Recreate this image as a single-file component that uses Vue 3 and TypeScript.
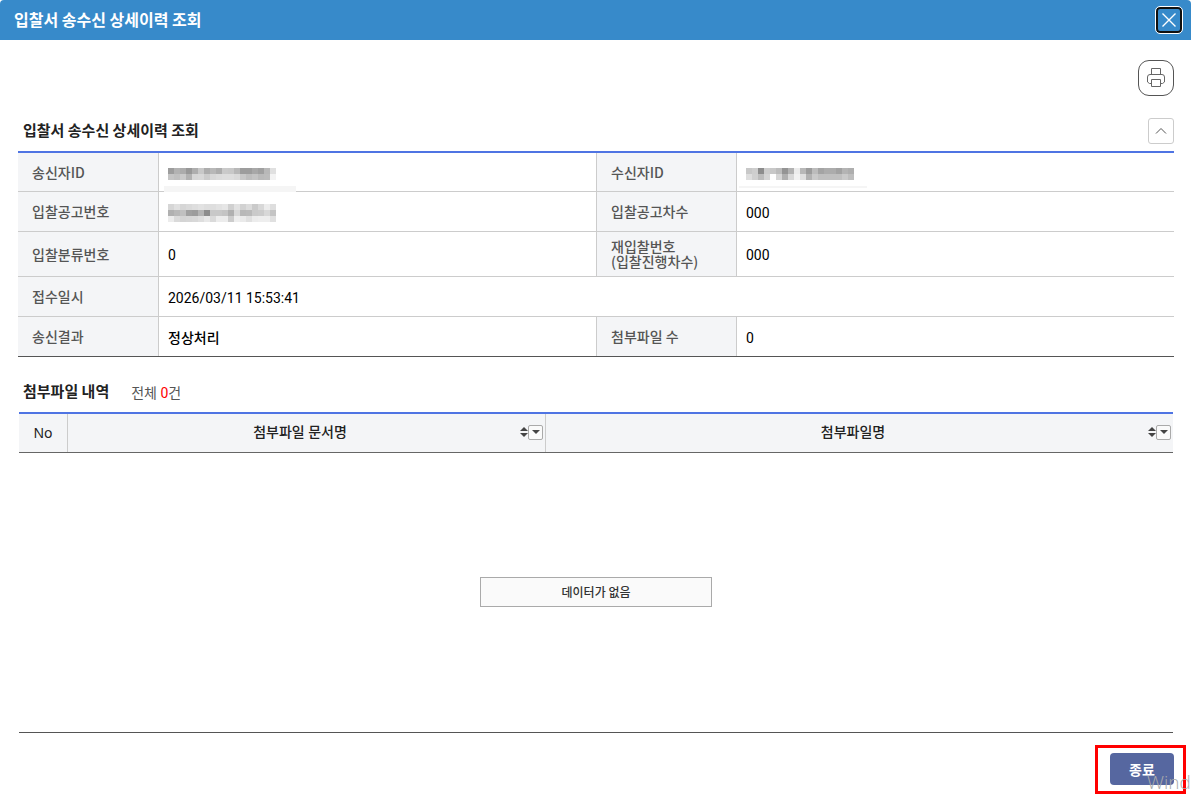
<script setup lang="ts">
interface Mosaic {
  label: string
  rows: number[][]
}

const CELL = 6

const sender: Mosaic = {
  label: '송신자ID 가림 처리',
  rows: [
    [157, 178, 172, 152, 174, 200, 173, 184, 173, 202, 200, 184, 157, 157, 168, 160, 184, 224],
    [197, 192, 202, 178, 214, 216, 204, 216, 220, 222, 222, 218, 200, 190, 196, 186, 188, 243],
  ],
}
const notice: Mosaic = {
  label: '입찰공고번호 가림 처리',
  rows: [
    [214, 224, 214, 218, 222, 226, 222, 222, 226, 230, 208, 226, 210, 220, 202, 216, 236, 222],
    [176, 184, 192, 160, 156, 180, 140, 200, 200, 196, 176, 216, 184, 186, 202, 204, 216, 196],
    [236, 218, 212, 214, 216, 222, 232, 218, 236, 236, 204, 238, 234, 224, 236, 238, 238, 224],
  ],
}
const receiver: Mosaic = {
  label: '수신자ID 가림 처리',
  rows: [
    [200, 206, 140, 204, 200, 188, 148, 178, 236, 184, 156, 188, 164, 172, 172, 162, 180, 174],
    [222, 208, 188, 212, 255, 214, 176, 216, 242, 224, 178, 202, 192, 192, 192, 192, 202, 190],
  ],
}

const gray = (v: number): string => `rgb(${v}, ${v}, ${v})`
const columns: string[] = ['첨부파일 문서명', '첨부파일명']
const total = 0
</script>

<template>
  <main class="dialog">
    <header class="bar">
      <h1>입찰서 송수신 상세이력 조회</h1>
      <button class="close" type="button" aria-label="닫기">
        <svg width="16" height="16" viewBox="0 0 16 16" aria-hidden="true">
          <path d="M1.500 1.500 14.500 14.500M14.500 1.500 1.500 14.500" fill="none" stroke="#fff" stroke-width="1.400" />
        </svg>
      </button>
    </header>

    <div class="body">
      <div class="tools">
        <button class="print" type="button" aria-label="인쇄">
          <svg width="20" height="20" viewBox="0 0 20 20" fill="none" stroke="#666" aria-hidden="true">
            <path d="M5.500 6.500V0.500h9v6M5.500 15.500H3.500L1.500 14V9a2.500 2.500 0 0 1 2.500-2.500h12a2.500 2.500 0 0 1 2.500 2.500v5l-2 1.500h-2M5.500 11.500h9v7h-9z" />
          </svg>
        </button>
      </div>

      <div class="heading">
        <h2>입찰서 송수신 상세이력 조회</h2>
        <button class="fold" type="button" aria-label="접기">
          <svg width="12" height="8" viewBox="0 0 12 8" aria-hidden="true">
            <path d="M1 6.500 6 1.500 11 6.500" fill="none" stroke="#555" />
          </svg>
        </button>
      </div>

      <table class="info">
        <colgroup>
          <col class="c-label" /><col /><col class="c-label" /><col />
        </colgroup>
        <tbody>
          <tr>
            <th scope="row">송신자ID</th>
            <td>
              <svg class="mosaic" width="108" height="12" role="img" :aria-label="sender.label" shape-rendering="crispEdges">
                <template v-for="(row, y) in sender.rows" :key="y">
                  <rect v-for="(v, x) in row" :key="x" :x="x * CELL" :y="y * CELL" :width="CELL" :height="CELL" :fill="gray(v)" />
                </template>
              </svg>
              <span class="smudge"></span>
            </td>
            <th scope="row">수신자ID</th>
            <td>
              <svg class="mosaic" width="108" height="12" role="img" :aria-label="receiver.label" shape-rendering="crispEdges">
                <template v-for="(row, y) in receiver.rows" :key="y">
                  <rect v-for="(v, x) in row" :key="x" :x="x * CELL" :y="y * CELL" :width="CELL" :height="CELL" :fill="gray(v)" />
                </template>
              </svg>
              <span class="smudge thin"></span>
            </td>
          </tr>
          <tr>
            <th scope="row">입찰공고번호</th>
            <td>
              <svg class="mosaic" width="108" height="18" role="img" :aria-label="notice.label" shape-rendering="crispEdges">
                <template v-for="(row, y) in notice.rows" :key="y">
                  <rect v-for="(v, x) in row" :key="x" :x="x * CELL" :y="y * CELL" :width="CELL" :height="CELL" :fill="gray(v)" />
                </template>
              </svg>
            </td>
            <th scope="row">입찰공고차수</th>
            <td>000</td>
          </tr>
          <tr class="tall">
            <th scope="row">입찰분류번호</th>
            <td>0</td>
            <th scope="row">재입찰번호<br />(입찰진행차수)</th>
            <td>000</td>
          </tr>
          <tr>
            <th scope="row">접수일시</th>
            <td colspan="3">2026/03/11 15:53:41</td>
          </tr>
          <tr>
            <th scope="row">송신결과</th>
            <td class="strong">정상처리</td>
            <th scope="row">첨부파일 수</th>
            <td>0</td>
          </tr>
        </tbody>
      </table>

      <div class="heading files">
        <h2>첨부파일 내역</h2>
        <p>전체 <em>{{ total }}</em>건</p>
      </div>

      <div class="grid">
        <table class="list">
          <colgroup>
            <col class="c-no" /><col class="c-doc" /><col />
          </colgroup>
          <thead>
            <tr>
              <th scope="col" class="no">No</th>
              <th v-for="name in columns" :key="name" scope="col">
                <div class="col-head">
                  <span class="name">{{ name }}</span>
                  <button class="sort" type="button" :aria-label="name + ' 정렬'">
                    <svg width="8" height="12" viewBox="0 0 8 12" fill="#444" aria-hidden="true">
                      <path d="M4 1 8 5H0zM0 7h8L4 11z" />
                    </svg>
                  </button>
                  <button class="filter" type="button" :aria-label="name + ' 필터'">
                    <svg width="8" height="4" viewBox="0 0 8 4" fill="#444" aria-hidden="true">
                      <path d="M0 0h8L4 4z" />
                    </svg>
                  </button>
                </div>
              </th>
            </tr>
          </thead>
        </table>
        <div class="empty"><p>데이터가 없음</p></div>
      </div>

      <footer>
        <div class="mark">
          <button class="end" type="button">종료</button>
          <span class="watermark">Wind</span>
        </div>
      </footer>
    </div>
  </main>
</template>

<style>
body {
  background: #fff;
  overflow: hidden;
}
</style>

<style scoped>
* {
  box-sizing: border-box;
}
.dialog {
  font-family: Roboto, "Noto Sans CJK KR", sans-serif;
  font-size: 14px;
  line-height: 20px;
  color: #000;
}
h1,
h2,
p {
  margin: 0;
}
button {
  display: flex;
  align-items: center;
  justify-content: center;
  flex: none;
  padding: 0;
  font: inherit;
  background: none;
  border: 0;
}
.bar {
  display: flex;
  align-items: center;
  justify-content: space-between;
  height: 40px;
  padding: 0 8px 0 14px;
  background: #378aca;
  border-radius: 4px 4px 0 0;
}
h1 {
  padding-bottom: 2px;
  font-family: "Noto Sans CJK KR", sans-serif;
  font-size: 16px;
  line-height: 24px;
  font-weight: 700;
  color: #fff;
}
.close {
  width: 28px;
  height: 28px;
  border: 1px solid #fff;
  border-radius: 5px;
  box-shadow: inset 0 0 0 2px #101010;
}
.body {
  padding: 20px 17px 0 18px;
}
.tools {
  display: flex;
  justify-content: flex-end;
}
.print {
  width: 36px;
  height: 36px;
  border: 1px solid #555;
  border-radius: 11px;
}
.heading {
  display: flex;
  align-items: center;
  height: 34px;
  margin-top: 18px;
  padding-left: 5px;
}
h2 {
  padding-bottom: 2px;
  font-family: "Noto Sans CJK KR", sans-serif;
  font-size: 15px;
  line-height: 22px;
  font-weight: 700;
  color: #222;
}
.fold {
  width: 26px;
  height: 26px;
  margin-left: auto;
  border: 1px solid #ccc;
  border-radius: 3px;
}
table {
  width: 100%;
  border-collapse: separate;
  border-spacing: 0;
  table-layout: fixed;
  border-top: 2px solid #4f74e3;
}
.info {
  margin-top: 3px;
  border-bottom: 1px solid #555;
}
.c-label {
  width: 141px;
}
.info tr {
  height: 40px;
}
.info tr:first-child {
  height: 39px;
}
.info tr.tall {
  height: 45px;
}
.info th,
.info td {
  padding: 2px 9px 0;
  text-align: left;
  vertical-align: middle;
  border-bottom: 1px solid #ccc;
}
.info tr:last-child > * {
  height: 39px;
  border-bottom: 0;
}
.info tr:last-child {
  height: 39px;
}
.info th {
  padding: 0 14px;
  font-family: "Noto Sans CJK KR", sans-serif;
  font-weight: 500;
  line-height: 15px;
  color: #555;
  background: #f4f5f7;
  border-right: 1px solid #ccc;
}
.info td + th {
  border-left: 1px solid #ccc;
}
.info td {
  position: relative;
}
.info .strong {
  font-weight: 500;
}
.mosaic {
  display: block;
}
.info tr:first-child .mosaic {
  margin-top: 2px;
}
.smudge {
  position: absolute;
  left: 5px;
  bottom: -1px;
  width: 132px;
  height: 6px;
  background: #f5f5f5;
}
.smudge.thin {
  left: 2px;
  bottom: 3px;
  width: 128px;
  height: 2px;
}
.files {
  height: 30px;
  margin-top: 20px;
}
.files p {
  margin-left: 22px;
  padding-top: 2px;
  color: #555;
}
.files em {
  font-style: normal;
  color: #f00;
}
.grid {
  margin: 5px 0 0 1px;
  padding-right: 1px;
}
.c-no {
  width: 48px;
}
.c-doc {
  width: 478px;
}
.list {
  border-bottom: 1px solid #666;
}
.list th {
  height: 38px;
  padding: 0;
  font-weight: 500;
  color: #222;
  background: #f4f5f7;
}
.list th + th {
  border-left: 1px solid #ccc;
}
.list th.no {
  font-family: "Noto Sans", sans-serif;
  font-weight: 400;
}
.col-head {
  display: flex;
  align-items: center;
  padding: 0 2px 2px 0;
}
.name {
  flex: 1;
  padding-left: 12px;
  text-align: center;
}
.sort {
  width: 8px;
  height: 16px;
}
.filter {
  width: 15px;
  height: 15px;
  background: #fafafa;
  border: 1px solid #aaa;
  border-radius: 2px;
}
.empty {
  display: flex;
  align-items: center;
  justify-content: center;
  height: 280px;
  padding-bottom: 2px;
  border-bottom: 1px solid #555;
}
.empty p {
  width: 232px;
  padding: 4px 0;
  font-family: "Noto Sans CJK KR", sans-serif;
  font-size: 12px;
  font-weight: 500;
  text-align: center;
  color: #333;
  background: #fafafa;
  border: 1px solid #aaa;
}
footer {
  display: flex;
  justify-content: flex-end;
  margin: 12px -12px 0 0;
}
.mark {
  position: relative;
  padding: 5px 9px 6px 12px;
  border: 3px solid #f00;
}
.end {
  width: 64px;
  height: 32px;
  font-family: "Noto Sans CJK KR", sans-serif;
  font-weight: 700;
  color: #fff;
  background: #5667a0;
  border-radius: 4px;
}
.watermark {
  position: absolute;
  left: 49px;
  top: 22px;
  font-family: "Open Sans", sans-serif;
  font-size: 19px;
  font-weight: 300;
  line-height: 24px;
  color: #aaa;
}
</style>
